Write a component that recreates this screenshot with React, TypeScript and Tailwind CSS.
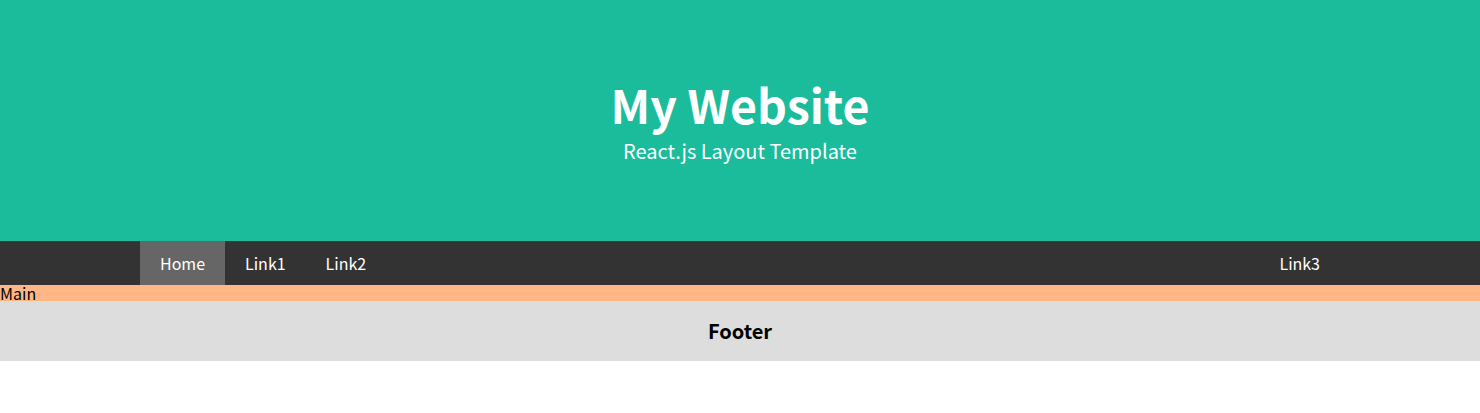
export default function App() {
  const links = ["Home", "Link1", "Link2"];
  return (
    <div className="font-['Noto_Sans_CJK_SC','Noto_Sans',sans-serif] text-base">
      <header className="bg-[#1abc9c] text-white text-center pt-[75px] pb-[76px]">
        <h1 className="text-[46.5px] font-bold leading-[58px]">My Website</h1>
        <p className="text-[20px] leading-[29px] mt-[3px]">React.js Layout Template</p>
      </header>
      <nav className="bg-[#333] text-white flex px-[140px] h-11">
        {links.map((l, i) => (
          <a key={l} href="#" className={`flex items-center px-5 ${i === 0 ? "bg-[#666]" : ""}`}>
            {l}
          </a>
        ))}
        <a href="#" className="flex items-center px-5 ml-auto">Link3</a>
      </nav>
      <main className="bg-[#ffb786] h-4 leading-4 text-black">Main</main>
      <footer className="bg-[#ddd] h-[60px] flex items-center justify-center">
        <h2 className="text-[20px] font-bold">Footer</h2>
      </footer>
    </div>
  );
}
